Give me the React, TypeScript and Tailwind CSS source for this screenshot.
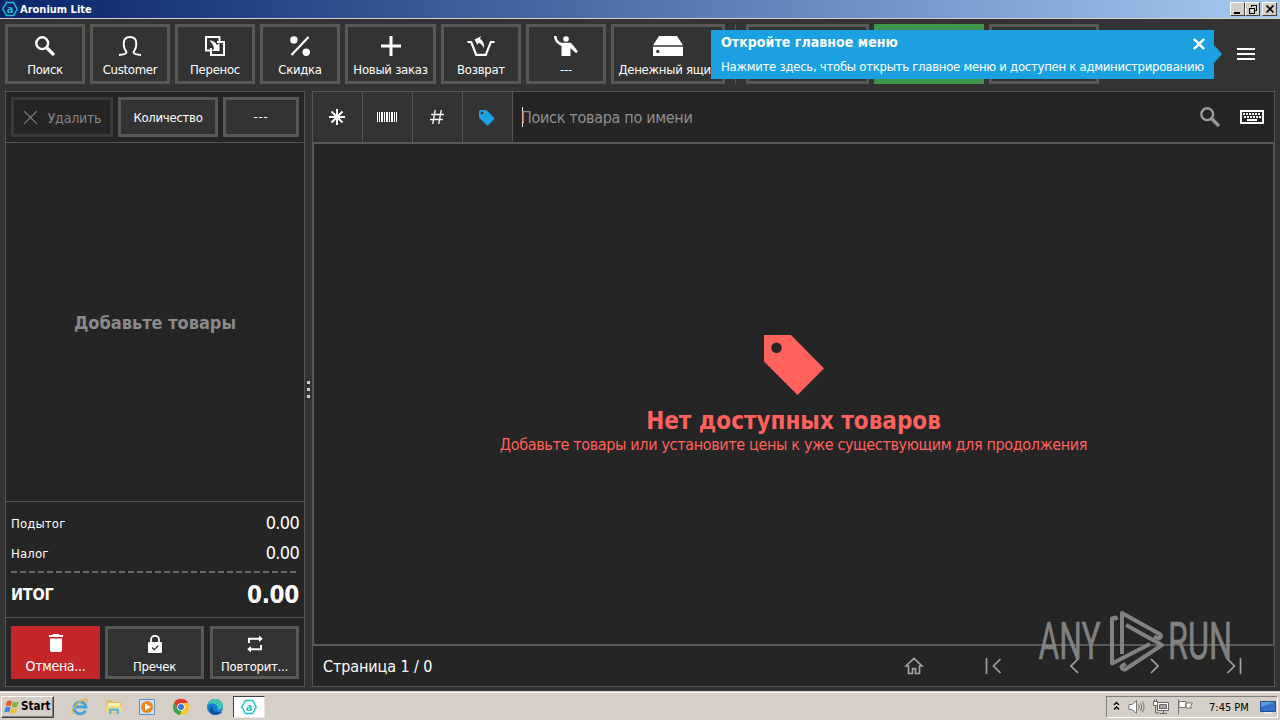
import React from 'react';
import clsx from 'clsx';

type IconProps = { className?: string };

// --- ICONS ---
const SearchIcon = ({ className }: IconProps) => (
    <svg viewBox="0 0 20 20" className={className} fill="none" stroke="currentColor">
        <circle cx="7.2" cy="7.2" r="5.9" strokeWidth="2.4" />
        <path d="M12 12l7 7" strokeWidth="3.2" />
    </svg>
);

const CustomerIcon = () => (
    <svg viewBox="0 0 24 20" className="w-6 h-5" fill="none" stroke="currentColor" strokeWidth="2">
        <path d="M1 19c3.500-.2 6.500-1 7.300-2.200.6-1-.2-1.800-1-2.800C6.100 12.300 5.700 10 5.700 7.500c0-4 2.300-6.500 6.300-6.500s6.300 2.500 6.300 6.500c0 2.500-.4 4.800-1.600 6.500-.8 1-1.600 1.800-1 2.800.8 1.200 3.800 2 7.300 2.200" />
    </svg>
);

const TransferIcon = () => (
    <svg viewBox="0 0 20 20" className="w-5 h-5" fill="none" stroke="currentColor" strokeWidth="2">
        <path d="M5 14.500H1V1h13.500v4" />
        <path d="M12 6h7v13H6V12" />
        <path d="M4.500 4.500c3-.2 6 1.500 7.500 4.500l2.500-2v8H7l2-2.500C8.500 9.500 7 7 4.500 4.500z" fill="currentColor" stroke="none" />
    </svg>
);

const DiscountIcon = () => (
    <svg viewBox="0 0 20 20" className="w-5 h-5" fill="currentColor">
        <circle cx="3.900" cy="3.900" r="3.700" />
        <circle cx="16.200" cy="16.200" r="3.700" />
        <path d="M18.500 1L1.500 19" stroke="currentColor" strokeWidth="2.200" />
    </svg>
);

const PlusIcon = () => (
    <svg viewBox="0 0 20 20" className="w-5 h-5" stroke="currentColor" strokeWidth="3">
        <path d="M10 0v20M0 10h20" />
    </svg>
);

const RefundIcon = () => (
    <svg viewBox="0 0 28 20" className="w-7 h-5" fill="none" stroke="currentColor" strokeWidth="2.200">
        <path d="M.5 6h3.700l5 12.800h9.600L23.800 6h3.700" />
        <path d="M7.500 3.500L14 .2 13 2.800c3.200 2 4.600 5.500 4 9.700-1.200-3.200-3-4.900-5.600-5.700L10.500 9z" fill="currentColor" stroke="none" />
    </svg>
);

const PersonIcon = () => (
    <svg viewBox="0 0 24 20" className="w-6 h-5" fill="currentColor">
        <circle cx="12" cy="3" r="2.800" />
        <path d="M0 0h2.500c.2 3.500 2.200 6.200 5.500 6.700h7c1.300 0 2.200.5 3 1.300l6 7.500-1.800 1.700-5.700-5V20H7.500V9.700C3 8.500.2 4.800 0 0z" />
    </svg>
);

const DrawerIcon = () => (
    <svg viewBox="0 0 30 20" className="w-[30px] h-5" fill="currentColor">
        <path d="M6 0h18l6 9.300H0z" />
        <path fillRule="evenodd" d="M0 10.700h30V20H0zM4.800 13.700a1.700 1.700 0 1 0 0 3.400 1.700 1.700 0 0 0 0-3.400z" />
    </svg>
);

const TagIcon = ({ className }: IconProps) => (
    <svg viewBox="0 0 60 60" className={className} fill="currentColor">
        <path fillRule="evenodd" d="M0 0h27l33 33.500L33.500 60 0 26.500zM12.500 7.500a5 5 0 1 0 0 10.500 5 5 0 0 0 0-10.500z" />
    </svg>
);

const SmallTagIcon = () => (
    <svg viewBox="0 0 17 17" className="w-[17px] h-[17px] text-[#1ba1e2]" fill="currentColor">
        <path fillRule="evenodd" d="M1 2.500Q1 1 2.500 1h5q.8 0 1.400.6l7 7q1 1 0 2l-5.400 5.400q-1 1-2 0l-7-7Q1 8.500 1 7.600zM4 2.700a1.300 1.300 0 1 0 0 2.600 1.300 1.300 0 0 0 0-2.600z" />
    </svg>
);

const AsteriskIcon = () => (
    <svg viewBox="0 0 16 16" className="w-4 h-4" stroke="currentColor" strokeWidth="2">
        <path d="M8 0v16M0 8h16M2.500 2.500l11 11M13.500 2.500l-11 11" />
    </svg>
);

const BarcodeIcon = () => (
    <svg viewBox="0 0 20 10" className="w-5 h-2.5" fill="currentColor" shapeRendering="crispEdges">
        <path d="M0 0h1v10H0zM2 0h1v10H2zM4 0h2v10H4zM7 0h1v10H7zM9 0h2v10H9zM12 0h1v10h-1zM14 0h2v10h-2zM17 0h1v10h-1zM19 0h1v10h-1z" />
    </svg>
);

const HashIcon = () => (
    <svg viewBox="0 0 14 14" className="w-3.5 h-3.5" stroke="currentColor" strokeWidth="1.300">
        <path d="M5.300 0l-2.600 14M11.300 0L8.700 14M1.200 4.500H14M0 9.500h12.800" />
    </svg>
);

const KeyboardIcon = () => (
    <svg viewBox="0 0 24 14" className="w-6 h-3.5" fill="none" stroke="currentColor" shapeRendering="crispEdges">
        <path d="M1 1h22v12H1z" strokeWidth="2" />
        <path d="M3 4h18" strokeWidth="2" strokeDasharray="2 1" />
        <path d="M4 7h17" strokeWidth="2" strokeDasharray="2 1" />
        <path d="M7 10h10" strokeWidth="2" />
    </svg>
);

const CrossIcon = ({ className, weight }: IconProps & { weight: number }) => (
    <svg viewBox="0 0 14 14" className={className} stroke="currentColor" strokeWidth={weight}>
        <path d="M1 1l12 12M13 1L1 13" />
    </svg>
);

const TrashIcon = () => (
    <svg viewBox="0 0 14 18" className="w-3.5 h-[18px]" fill="currentColor">
        <path d="M0 1h3.500l1-1h5l1 1H14v2H0zM1 4.500h12V16q0 2-2 2H3q-2 0-2-2z" />
    </svg>
);

const LockIcon = () => (
    <svg viewBox="0 0 14 18" className="w-3.5 h-[18px]" fill="none">
        <path d="M3 8V4.800a4 4 0 0 1 8 0V8" stroke="currentColor" strokeWidth="1.800" />
        <rect y="7" width="14" height="11" rx="1.300" fill="currentColor" />
        <path d="M4 12.500l2.200 2.200 4-4" stroke="#333" strokeWidth="1.300" />
    </svg>
);

const RepeatIcon = () => (
    <svg viewBox="0 0 16 18" className="w-4 h-[18px]" fill="currentColor">
        <path d="M1 8V2.800h11V.5L15.800 3.800 12 7V4.800H3V8zM15 10v5.200H4v2.300L.2 14.200 4 11v2.200h9V10z" />
    </svg>
);

const AroniumLogo = ({ className }: IconProps) => (
    <svg viewBox="0 0 16 16" className={className} fill="none" stroke="currentColor">
        <path d="M4.500 1.500h7L15.200 8l-3.700 6.500h-7L.8 8z" strokeWidth="1.400" />
        <text x="8" y="11.500" textAnchor="middle" fontSize="11" fontWeight="bold" fontFamily="Noto Sans" fill="currentColor" stroke="none">a</text>
    </svg>
);

// --- BUTTONS ---
const ToolButton = ({ label, width, icon }: { label?: string; width: string; icon?: React.ReactNode }) => (
    <button className={clsx('h-[60px] shrink-0 border-3 border-[#585855] bg-[#333333] flex flex-col items-center pt-[9px] text-white whitespace-nowrap', width)}>
        {icon}
        {label && <span className="mt-[5px] leading-[18px] tracking-[-0.27px]">{label}</span>}
    </button>
);

const tools = [
    { label: 'Поиск', width: 'w-20', icon: <SearchIcon className="w-5 h-5" /> },
    { label: 'Customer', width: 'w-20', icon: <CustomerIcon /> },
    { label: 'Перенос', width: 'w-20', icon: <TransferIcon /> },
    { label: 'Скидка', width: 'w-20', icon: <DiscountIcon /> },
    { label: 'Новый заказ', width: 'w-[91px]', icon: <PlusIcon /> },
    { label: 'Возврат', width: 'w-20', icon: <RefundIcon /> },
    { label: '---', width: 'w-20', icon: <PersonIcon /> },
    { label: 'Денежный ящик', width: 'w-[114px]', icon: <DrawerIcon /> },
];

const TitleBar = () => (
    <header className="h-[19px] shrink-0 flex items-center justify-between pl-[2px] pr-[3px] border-b border-[#d4d0c8] bg-linear-to-r from-[#0a246a] to-[#a6caf0]">
        <div className="flex items-center gap-[2px]">
            <AroniumLogo className="w-4 h-4 text-[#19c3dc]" />
            <span className="text-[11px] leading-none font-bold text-white">Aronium Lite</span>
        </div>
        <div className="flex text-black">
            {['min', 'restore', 'close'].map((kind) => (
                <button key={kind} className={clsx('w-[15px] h-[14px] bg-[#d4d0c8] border border-t-white border-l-white border-b-[#404040] border-r-[#404040] flex items-center justify-center', kind === 'close' && 'ml-[2px]')}>
                    <svg viewBox="0 0 10 10" className="w-2.5 h-2.5" fill="none" stroke="currentColor" shapeRendering={kind === 'close' ? 'auto' : 'crispEdges'}>
                        {kind === 'min' && <path d="M1 9h6" strokeWidth="2" />}
                        {kind === 'restore' && <path d="M3 1h6M3 1.500h6M3.500 1v2M8.500 1v5.500H7M1 4.500h6M1.500 4v5.500h5V4" />}
                        {kind === 'close' && <path d="M1.500 1.500l7 7M8.500 1.500l-7 7" strokeWidth="1.600" />}
                    </svg>
                </button>
            ))}
        </div>
    </header>
);

const Toolbar = () => (
    <div className="relative h-[72px] shrink-0 flex gap-[5px] pt-[5px] pl-[5px]">
        {tools.map((t, i) => <ToolButton key={i} {...t} />)}
        <div className="w-px h-[60px] ml-[5px] mr-[5px] bg-[#555553]" />
        <ToolButton width="w-[123px]" />
        <div className="w-[110px] h-[60px] bg-[#3f954a]" />
        <ToolButton width="w-[110px]" />
        <button className="absolute left-[1237px] top-[29px] w-[18px] flex flex-col gap-[3px]">
            <span className="h-0.5 w-full bg-white" />
            <span className="h-0.5 w-full bg-white" />
            <span className="h-0.5 w-full bg-white" />
        </button>
        {/* Hint over the toolbar */}
        <div className="absolute left-[711px] top-[11px] w-[503px] h-[49px] bg-[#1ba1e2] text-white pl-[10px] whitespace-nowrap">
            <h4 className="text-sm leading-6 font-bold tracking-[0.06px]">Откройте главное меню</h4>
            <p className="leading-[26px] tracking-[-0.27px]">Нажмите здесь, чтобы открыть главное меню и доступен к администрированию</p>
            <CrossIcon weight={2.8} className="absolute right-[9px] top-2 w-3 h-3" />
            <svg viewBox="0 0 8 18" className="absolute -right-2 top-[15px] w-2 h-[18px]" fill="#1ba1e2"><path d="M0 0l8 9-8 9z" /></svg>
        </div>
    </div>
);

// --- ORDER PANEL ---
const OrderPanel = () => (
    <section className="w-[300px] shrink-0 border border-[#555553] bg-[#252525] flex flex-col">
        <div className="h-[51px] shrink-0 flex gap-[5px] p-[5px] border-b border-[#555553] text-white">
            <button className="w-[102px] h-10 border-3 border-[#3a3a39] flex items-center justify-center gap-2.5 pt-px text-sm text-[#858585] tracking-[-0.2px]">
                <CrossIcon weight={1} className="w-[15px] h-[15px]" />Удалить
            </button>
            <button className="w-[100px] h-10 pt-px border-3 border-[#585855] bg-[#333333] tracking-[-0.27px]">Количество</button>
            <button className="w-[76px] h-10 border-3 border-[#585855] bg-[#333333] tracking-[0.8px]">---</button>
        </div>
        <div className="flex-1 flex items-center justify-center pt-[2px] text-lg font-bold text-[#8a8a8a]">Добавьте товары</div>
        <div className="h-[117px] shrink-0 px-[5px] pt-1.5 border-y border-[#555553] text-white">
            <div className="h-[30px] flex items-center justify-between">
                <span className="pt-px tracking-[0.15px]">Подытог</span><span className="text-lg tracking-[-0.7px]">0.00</span>
            </div>
            <div className="h-[30px] flex items-center justify-between">
                <span className="pt-px tracking-[0.15px]">Налог</span><span className="text-lg tracking-[-0.7px]">0.00</span>
            </div>
            <svg className="block w-[288px] h-[10px]"><path d="M0 4h287" stroke="#696969" strokeWidth="2" strokeDasharray="6 3" /></svg>
            <div className="h-[33px] flex items-center justify-between font-bold">
                <span className="text-base leading-none tracking-[-0.2px]">ИТОГ</span><span className="text-2xl leading-none tracking-[-0.3px]">0.00</span>
            </div>
        </div>
        <div className="h-[68px] shrink-0 flex pl-[5px] pt-2 text-white leading-[18px] tracking-[-0.27px]">
            <button className="w-[89px] h-[53px] bg-[#c5262a] flex flex-col items-center gap-[5px] pt-2 text-[14px]"><TrashIcon />Отмена...</button>
            <button className="w-[99px] h-[53px] ml-[5px] border-3 border-[#585855] bg-[#333333] flex flex-col items-center gap-[5px] pt-[6px]"><LockIcon />Пречек</button>
            <button className="w-[89px] h-[53px] ml-1.5 border-3 border-[#585855] bg-[#333333] flex flex-col items-center gap-[5px] pt-[6px]"><RepeatIcon />Повторит...</button>
        </div>
    </section>
);

// --- PRODUCTS PANEL ---
const modes = [<AsteriskIcon />, <BarcodeIcon />, <HashIcon />, <SmallTagIcon />];

const pager = [
    'M4.500 17.500V10H2l8-7.500 8 7.500h-2.500v7.500h-4v-5h-3v5z',
    'M2.500 2v16M16.500 3l-7 7 7 7',
    'M14 3l-7 7 7 7',
    'M7 3l7 7-7 7',
    'M3.500 3l7 7-7 7M16.500 2v16',
];

const ProductsPanel = () => (
    <section className="relative w-[963px] shrink-0 border border-[#555553] bg-[#252525] flex flex-col">
        <div className="h-[50px] shrink-0 flex text-white">
            {modes.map((icon, i) => (
                <button key={i} className="w-[50px] h-full pr-[2px] border-r border-[#555553] bg-[#333333] flex items-center justify-center">{icon}</button>
            ))}
            <div className="flex-1 flex items-center pl-[9px] pr-2.5">
                <div className="w-px h-5 bg-white" />
                <span className="flex-1 -ml-[2px] pt-[2px] text-base text-[#8f8f8f] tracking-[-0.3px]">Поиск товара по имени</span>
                <SearchIcon className="w-5 h-5 mr-5 text-[#9a9a9a]" />
                <KeyboardIcon />
            </div>
        </div>
        <div className="flex-1 border-y-2 border-x border-[#585855] flex flex-col items-center text-[#ff625c] pt-[191px]">
            <TagIcon className="w-[60px] h-[60px]" />
            <h2 className="mt-3 text-2xl leading-7 font-bold">Нет доступных товаров</h2>
            <p className="text-base leading-5 tracking-[-0.35px]">Добавьте товары или установите цены к уже существующим для продолжения</p>
        </div>
        <div className="h-10 shrink-0 flex items-center justify-between pl-[10px] text-white">
            <span className="pt-px text-base tracking-[-0.1px]">Страница 1 / 0</span>
            <div className="flex text-[#a3a3a3]">
                {pager.map((d, i) => (
                    <button key={i} className="w-20 flex justify-center">
                        <svg viewBox="0 0 20 20" className="w-5 h-5" fill="none" stroke="currentColor" strokeWidth="1.700"><path d={d} /></svg>
                    </button>
                ))}
            </div>
        </div>
        <svg viewBox="0 0 204 64" className="absolute left-[725px] top-[517px] w-[204px] h-16 opacity-90" fill="#8c8c8c">
            <g fontFamily="Roboto" fontSize="51" stroke="#8c8c8c" strokeWidth=".6">
                <text x="0.5" y="50" textLength="62" lengthAdjust="spacingAndGlyphs">ANY</text>
                <text x="130" y="50" textLength="64" lengthAdjust="spacingAndGlyphs">RUN</text>
            </g>
            <g fill="none" stroke="#8c8c8c" strokeWidth="4" strokeLinejoin="round">
                <path d="M79 11l-1.500-2.500-3.500 1V54.500l38-19.500" />
                <path d="M84 45V4l38.500 21.500q1.500 2-1.500 4l-5-2" />
                <path d="M88 16l36 20L87 60.500q-3 .5-3.500-3l4-3" />
            </g>
        </svg>
    </section>
);

// --- TASKBAR ---
const Taskbar = () => (
    <footer className="h-[29px] shrink-0 border-t border-[#d4d0c8] bg-[#d6cfc7]">
        <div className="h-full border-t border-white flex items-center justify-between pt-px pl-px pr-[2px] text-black">
            <div className="flex items-center">
                <button className="w-[53px] h-[22px] flex items-center gap-px pl-[2px] border border-t-white border-l-white border-b-[#404040] border-r-[#404040] shadow-[inset_-1px_-1px_0_#808080]">
                    <svg viewBox="0 0 16 16" className="w-4 h-4">
                        <path d="M3 2.500Q5.500.5 8 2.200L6.800 7.200Q4.500 5.800 1.700 7.300z" fill="#e8562a" />
                        <path d="M9 2.600Q11.500 4 14.700 2.500L13.400 7.500Q10.800 9 7.800 7.500z" fill="#7db83a" />
                        <path d="M1.400 8.400Q4 7 6.500 8.300L5.300 13.300Q3 12 .1 13.300z" fill="#3f8ad6" />
                        <path d="M7.500 8.700Q10.200 10.200 13.100 8.700L11.700 13.700Q9 15.200 6.200 13.700z" fill="#f5bd2b" />
                    </svg>
                    <span className="text-[11.5px] font-bold leading-none">Start</span>
                </button>
                <svg viewBox="0 0 18 18" className="w-[18px] h-[18px] ml-[17px]" fill="none">
                    <path d="M14.500 12.500A6 6 0 1 1 15 9H5" stroke="#3fa4dc" strokeWidth="2.800" />
                    <path d="M1.500 16C-1 13 7 3 14 1.500c3-.6 3 1.500 2 3" stroke="#e5b83c" strokeWidth="1.300" />
                </svg>
                <svg viewBox="0 0 18 18" className="w-[18px] h-[18px] ml-[16px]">
                    <path d="M1.500 2h6l1 2H16v11H1.500z" fill="#e3c163" />
                    <path d="M3 5h12v5H3z" fill="#fbf0b6" />
                    <path d="M1.500 8h15v6.500h-15z" fill="#f4dc82" />
                    <path d="M4 16v-5.500h10V16h-2.500v-3h-5v3z" fill="#65b5dc" />
                </svg>
                <svg viewBox="0 0 18 18" className="w-[18px] h-[18px] ml-[15px]">
                    <path d="M1.500 1.500h15v15h-15z" fill="#cfe3f2" stroke="#5b93c7" />
                    <circle cx="9" cy="9" r="6" fill="#f0851d" />
                    <path d="M7 5.500l6 3.500-6 3.500z" fill="#fff" />
                </svg>
                <svg viewBox="0 0 18 18" className="w-[18px] h-[18px] ml-[16px]">
                    <circle cx="9" cy="9" r="8" fill="#f9c723" />
                    <path d="M2 5a8 8 0 0 1 14 0H9L5.500 11z" fill="#e23b2e" />
                    <path d="M2 5l4 6.500 3.500 1L8 17A8 8 0 0 1 2 5z" fill="#36a352" />
                    <circle cx="9" cy="9" r="3.800" fill="#fff" />
                    <circle cx="9" cy="9" r="3" fill="#3b78e0" />
                </svg>
                <svg viewBox="0 0 18 18" className="w-[18px] h-[18px] ml-[16px]">
                    <circle cx="9" cy="9" r="8" fill="#1680cf" />
                    <path d="M1.500 7C3 2.500 6 1 9 1c5 0 8 3.500 8 7 0 3-3 4-6 3.500 1-1 1-3-.5-4.500C8 5 4 5 1.500 7z" fill="#3fc6b4" />
                    <path d="M6.500 8c-1 4 2 7 8.500 6 1-.3 1.300 0 .7.600C12 18 6 17.500 4 13.500 3 11 4.500 9 6.500 8z" fill="#0c4f9c" />
                </svg>
                <button className="w-8 h-[22px] ml-[9px] bg-white border border-t-[#404040] border-l-[#404040] border-b-[#e8e4de] border-r-[#e8e4de] flex items-center justify-center">
                    <AroniumLogo className="w-4 h-4 text-[#19c3c9]" />
                </button>
            </div>
            <div className="w-[172px] h-[22px] flex items-center pl-[6px] border border-t-[#808080] border-l-[#808080] border-b-white border-r-white">
                <svg viewBox="0 0 7 10" className="w-[7px] h-2.5 -mt-[3px]" fill="none" stroke="#000" strokeWidth="1.400"><path d="M1 4l2.500-2.500L6 4M1 8.500L3.500 6 6 8.500" /></svg>
                <svg viewBox="0 0 17 16" className="w-[17px] h-4 ml-2" fill="none" stroke="#777">
                    <path d="M1 5.500h3L8.500 1.500v13L4 10.500H1z" fill="#fff" />
                    <path d="M10.500 5.500q1.500 2.500 0 5M12.500 4q2.600 4 0 8M14.300 2.500q3.500 5.500 0 11" />
                </svg>
                <svg viewBox="0 0 16 16" className="w-4 h-4 ml-2" fill="#fff" stroke="#666">
                    <path d="M4.500 3.500h11v8h-11z" /><path d="M6.500 5.500h7v4h-7z" fill="#aaa" />
                    <path d="M7 14.500h7M10.500 12v2M2.500 6v8h4" fill="none" />
                    <path d="M.5 2.500h4v4h-4zM1.500.5v2M3.500.5v2" />
                </svg>
                <svg viewBox="0 0 17 16" className="w-[17px] h-4 ml-2" fill="#fff" stroke="#777"><path d="M1.500.5v15M2 2.500h7v6H2zM9 4h6.500l-2 3 1 2H9z" /></svg>
                <span className="ml-[15px] text-[11px] leading-none whitespace-nowrap">7:45 PM</span>
                <svg viewBox="0 0 16 14" className="w-4 h-3.5 ml-auto mr-px">
                    <path d="M.5 1.500h15v10H.5z" fill="#3372cb" stroke="#214f98" />
                    <path d="M1 2h14L1 7z" fill="#6199df" /><path d="M4 12h8v1.500H4z" fill="#e6edf5" />
                </svg>
            </div>
        </div>
    </footer>
);

export default function App() {
    return (
        <div className="w-[1280px] h-[720px] overflow-hidden flex flex-col bg-[#333333] text-[13px] font-['DejaVu_Sans_Condensed','Noto_Sans',sans-serif]">
            <TitleBar />
            <Toolbar />
            <main className="h-[596px] shrink-0 flex pl-[5px]">
                <OrderPanel />
                <div className="w-[7px] flex flex-col items-center justify-center gap-1">
                    <span className="w-[3px] h-[3px] bg-[#d0d0d0]" />
                    <span className="w-[3px] h-[3px] bg-[#d0d0d0]" />
                    <span className="w-[3px] h-[3px] bg-[#d0d0d0]" />
                </div>
                <ProductsPanel />
            </main>
            <div className="h-1 shrink-0" />
            <Taskbar />
        </div>
    );
}
